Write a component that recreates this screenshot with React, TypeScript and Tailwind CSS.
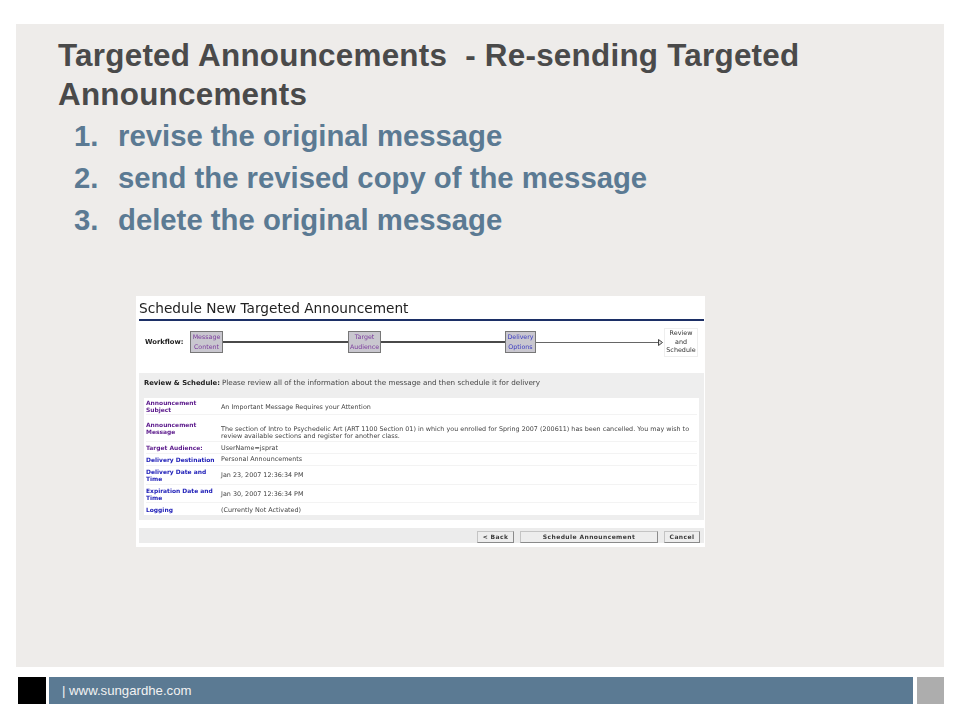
const rows = [
  { label: "Announcement Subject", value: "An Important Message Requires your Attention", h: "h-[17px]", color: "text-[#5c1a8c]", pad: "pt-[2px]" },
  {
    label: "Announcement Message",
    value:
      "The section of Intro to Psychedelic Art (ART 1100 Section 01) in which you enrolled for Spring 2007 (200611) has been cancelled. You may wish to review available sections and register for another class.",
    h: "h-[27px]",
    color: "text-[#5c1a8c]",
    pad: "pt-[9px]",
  },
  { label: "Target Audience:", value: "UserName=jsprat", h: "h-[12px]", color: "text-[#5c1a8c]", pad: "pt-[2px]" },
  { label: "Delivery Destination", value: "Personal Announcements", h: "h-[12px]", color: "text-[#2020b8]", pad: "" },
  { label: "Delivery Date and Time", value: "Jan 23, 2007 12:36:34 PM", h: "h-[19px]", color: "text-[#2020b8]", pad: "" },
  { label: "Expiration Date and Time", value: "Jan 30, 2007 12:36:34 PM", h: "h-[18px]", color: "text-[#2020b8]", pad: "pt-[2px]" },
  { label: "Logging", value: "(Currently Not Activated)", h: "h-[12px]", color: "text-[#2020b8]", pad: "pt-[2px]" },
];

const steps = ["revise the original message", "send the revised copy of the message", "delete the original message"];

const StepBox = ({ top, bottom, color, w }: { top: string; bottom: string; color: string; w: string }) => (
  <div
    className={`${w} h-[22px] shrink-0 flex flex-col items-center justify-center bg-[#c9c7cf] border border-[#777777] text-[6.3px] leading-[10px] ${color}`}
  >
    <span>{top}</span>
    <span>{bottom}</span>
  </div>
);

const Button = ({ label, w }: { label: string; w: string }) => (
  <div
    className={`${w} h-[12px] flex items-center justify-center bg-[#ededed] border border-[#c4c4c4] border-r-[#8a8a8a] border-b-[#8a8a8a] text-[6px] font-bold text-[#3a3a3a] tracking-[0.4px]`}
  >
    {label}
  </div>
);

const ScreenshotPanel = () => (
  <div className="w-[569px] h-[251px] bg-white font-['DejaVu_Sans',sans-serif] flex flex-col pl-[3px] pr-px text-[#333333] blur-[0.3px]">
    <div className="h-[23px] flex items-end pb-[2px] text-[13.7px] leading-[18px] text-[#222222]">
      Schedule New Targeted Announcement
    </div>
    <div className="h-[2px] bg-[#1c2f66]" />

    <div className="h-[52px] flex items-center pl-[6px] pr-[6px] pb-[10px]">
      <span className="w-[45px] shrink-0 text-[6.8px] font-bold text-[#222222]">Workflow:</span>
      <StepBox top="Message" bottom="Content" color="text-[#7a3a9c]" w="w-[33px]" />
      <div className="w-[125px] h-[2px] bg-[#4a4a4a]" />
      <StepBox top="Target" bottom="Audience" color="text-[#7a3a9c]" w="w-[33px]" />
      <div className="w-[124px] h-[2px] bg-[#4a4a4a]" />
      <StepBox top="Delivery" bottom="Options" color="text-[#3a3ac0]" w="w-[31px]" />
      <div className="flex-1 h-px bg-[#666666]" />
      <svg width="5" height="7" viewBox="0 0 5 7" className="shrink-0">
        <path d="M0.5 0.5 L4.5 3.5 L0.5 6.5 Z" fill="#dddddd" stroke="#444444" strokeWidth="1" />
      </svg>
      <div className="ml-px w-[34px] h-[29px] shrink-0 flex flex-col items-center justify-center bg-white border border-[#eeeeee] text-[6.4px] leading-[8.5px] text-[#333333]">
        <span>Review</span>
        <span>and</span>
        <span>Schedule</span>
      </div>
    </div>

    <div className="h-[147px] bg-[#eeeeee] flex flex-col px-[5px]">
      <div className="h-[25px] flex items-center pb-[5px] text-[7.2px] text-[#444444] whitespace-nowrap">
        <span className="font-bold text-[6.8px] text-[#222222] mr-[2px]">Review &amp; Schedule:</span>
        Please review all of the information about the message and then schedule it for delivery
      </div>
      <div className="w-[555px] bg-white flex flex-col px-[2px]">
        {rows.map((row) => (
          <div key={row.label} className={`${row.h} flex items-center border-b border-[#f3f3f3] last:border-b-0`}>
            <span className={`w-[75px] shrink-0 text-[5.95px] leading-[7px] font-bold ${row.color}`}>{row.label}</span>
            <span className={`flex-1 text-[6.4px] leading-[7px] text-[#444444] ${row.pad}`}>{row.value}</span>
          </div>
        ))}
      </div>
    </div>

    <div className="mt-[8px] h-[15px] bg-[#ececec] flex items-center justify-end gap-[6px] pt-[2px] pr-[4px]">
      <Button label="< Back" w="w-[37px]" />
      <Button label="Schedule Announcement" w="w-[138px]" />
      <Button label="Cancel" w="w-[36px]" />
    </div>
  </div>
);

export default function App() {
  return (
    <div className="w-[960px] h-[720px] bg-white flex flex-col font-['Liberation_Sans',Arial,sans-serif]">
      <div className="mt-[24px] mx-[16px] h-[643px] bg-[#eeecea] flex flex-col">
        <div className="pt-[12px] pl-[42px] pr-[100px] text-[31.4px] leading-[39px] tracking-[0.25px] font-bold text-[#4a4a4a]">
          {"Targeted Announcements\u00A0 - Re-sending Targeted Announcements"}
        </div>
        <ol className="pl-[58px] pt-px text-[29.3px] leading-[42px] font-bold text-[#5b7a93]">
          {steps.map((step, i) => (
            <li key={step} className="flex">
              <span className="w-[44px] shrink-0">{i + 1}.</span>
              <span>{step}</span>
            </li>
          ))}
        </ol>
        <div className="mt-[55px] ml-[120px]">
          <ScreenshotPanel />
        </div>
      </div>
      <div className="mt-[10px] h-[27px] flex pl-[18px] pr-[16px]">
        <div className="w-[28px] bg-black" />
        <div className="ml-[3px] w-[864px] bg-[#5b7a93] flex items-center pl-[13px] text-[13.2px] text-[#f2f2f2]">
          | www.sungardhe.com
        </div>
        <div className="ml-[4px] flex-1 bg-[#adadad]" />
      </div>
    </div>
  );
}
